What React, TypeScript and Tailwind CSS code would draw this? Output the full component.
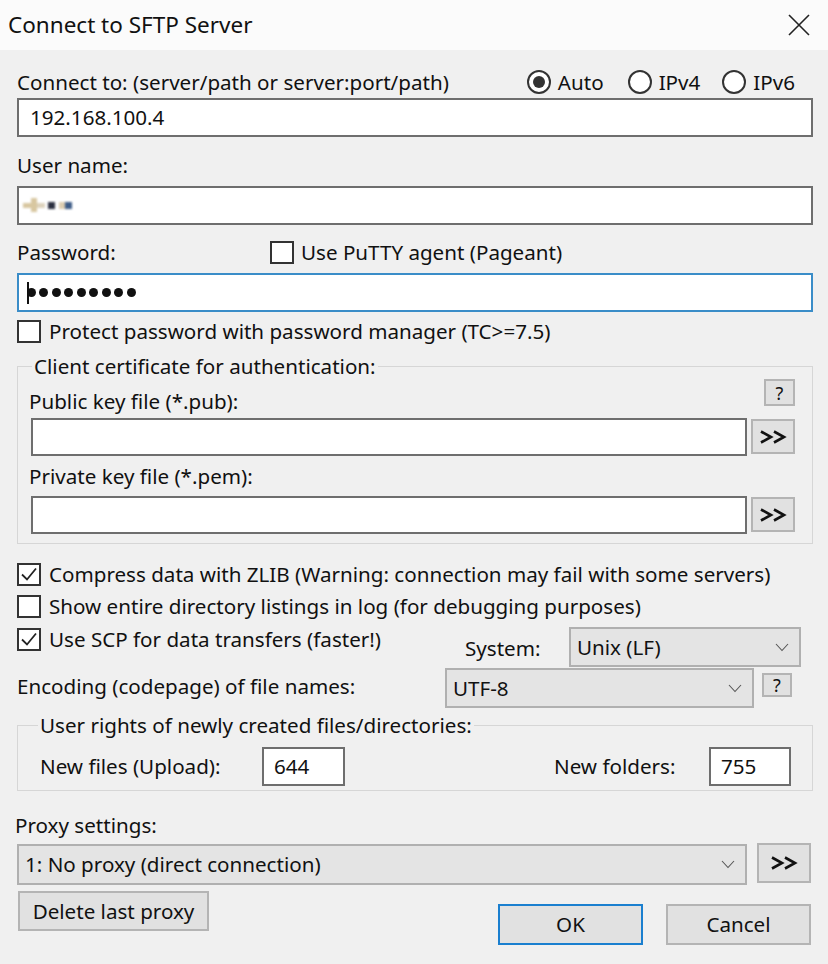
import * as React from "react"

const FONT = { fontFamily: "'Noto Sans', 'Liberation Sans', Arial, sans-serif" }

function Check({ checked = false }: { checked?: boolean }) {
  return (
    <span className="inline-flex w-[24px] h-[23px] shrink-0 items-center justify-center border-2 border-[#333] bg-white">
      {checked && (
        <svg width="18" height="16" viewBox="0 0 18 16" fill="none">
          <path d="M2 8.5 L7 13.5 L16 2.5" stroke="#222" strokeWidth="1.8" />
        </svg>
      )}
    </span>
  )
}

function Radio({ on = false }: { on?: boolean }) {
  return (
    <span className="inline-flex w-[24px] h-[24px] shrink-0 items-center justify-center rounded-full border-2 border-[#333] bg-white">
      {on && <span className="w-[12px] h-[12px] rounded-full bg-[#333]" />}
    </span>
  )
}

function TextBox({ className = "", focused = false, children }: { className?: string; focused?: boolean; children?: React.ReactNode }) {
  return (
    <div className={`flex items-center bg-white border-2 ${focused ? "border-[#3a8dc8]" : "border-[#6e6e6e]"} ${className}`}>
      {children}
    </div>
  )
}

function Combo({ className = "", value }: { className?: string; value: string }) {
  return (
    <div className={`flex items-center justify-between bg-[#e4e4e4] border-2 border-[#b0b0b0] pl-[6px] pr-[10px] ${className}`}>
      <span>{value}</span>
      <svg width="14" height="9" viewBox="0 0 14 9" fill="none">
        <path d="M1 1 L7 7.5 L13 1" stroke="#555" strokeWidth="1.1" />
      </svg>
    </div>
  )
}

function Btn({ className = "", children }: { className?: string; children: React.ReactNode }) {
  return (
    <div className={`flex items-center justify-center bg-[#e1e1e1] border-2 border-[#b4b4b4] ${className}`}>
      {children}
    </div>
  )
}

function Chevrons() {
  return (
    <svg width="28" height="14" viewBox="0 0 28 14" fill="none">
      <path d="M2 1.5 L12 7 L2 12.5" stroke="#111" strokeWidth="2.6" />
      <path d="M15 1.5 L25 7 L15 12.5" stroke="#111" strokeWidth="2.6" />
    </svg>
  )
}

export default function App() {
  return (
    <div className="w-[828px] h-[964px] bg-[#f0f0f0] text-[20.6px] text-[#111] leading-none overflow-hidden" style={FONT}>
      {/* Title bar */}
      <div className="h-[50px] bg-[#fbfbfb] flex items-center justify-between pl-[8px] pr-[18px]">
        <span className="text-[22.5px] text-[#111]">Connect to SFTP Server</span>
        <svg width="22" height="22" viewBox="0 0 22 22" fill="none">
          <path d="M1 1 L21 21 M21 1 L1 21" stroke="#222" strokeWidth="1.6" />
        </svg>
      </div>

      <div className="flex flex-col pl-[17px] pr-[15px]">
        {/* Connect to */}
        <div className="mt-[19px] h-[26px] flex items-center">
          <span className="flex-1">Connect to: (server/path or server:port/path)</span>
          <div className="flex items-center gap-[7px] mr-[18px]">
            <Radio on />
            <span className="mr-[17px]">Auto</span>
            <Radio />
            <span className="mr-[15px]">IPv4</span>
            <Radio />
            <span>IPv6</span>
          </div>
        </div>
        <TextBox className="mt-[3px] h-[39px] pl-[11px]">192.168.100.4</TextBox>

        {/* User name */}
        <div className="mt-[15px] h-[26px] flex items-center">User name:</div>
        <TextBox className="mt-[8px] h-[39px] pl-[4px]">
          <div className="flex items-center blur-[0.8px]">
            <span className="w-[8px] h-[5px] bg-[#d8c7a0]" />
            <span className="w-[6px] h-[14px] bg-[#d8c7a0] -mt-[2px]" />
            <span className="w-[8px] h-[5px] bg-[#ddd3bd] mr-[3px]" />
            <span className="w-[7px] h-[7px] bg-[#2b2f3f] mr-[4px]" />
            <span className="w-[6px] h-[7px] bg-[#dccdb0]" />
            <span className="w-[7px] h-[7px] bg-[#3c5b86]" />
          </div>
        </TextBox>

        {/* Password */}
        <div className="mt-[14px] h-[26px] flex items-center">
          <span className="w-[253px]">Password:</span>
          <Check />
          <span className="ml-[7px]">Use PuTTY agent (Pageant)</span>
        </div>
        <TextBox focused className="mt-[8px] h-[39px] pl-[8px] gap-[3.5px]">
          <span className="w-[2px] h-[22px] bg-[#111] -mr-[6px]" />
          {Array.from({ length: 9 }).map((_, i) => (
            <span key={i} className="w-[9px] h-[9px] rounded-full bg-[#111]" />
          ))}
        </TextBox>

        <div className="mt-[8px] h-[23px] flex items-center">
          <Check />
          <span className="ml-[8px]">Protect password with password manager (TC&gt;=7.5)</span>
        </div>

        {/* Client certificate */}
        <fieldset className="mt-[10px] border border-[#d6d6d6] pl-[13px] pr-[17px] pb-[9px]">
          <legend className="px-[2px] ml-[1px] leading-[26px]">Client certificate for authentication:</legend>
          <div className="h-[35px] flex justify-between">
            <span className="self-end leading-[26px] -ml-[2px]">Public key file (*.pub):</span>
            <Btn className="w-[31px] h-[27px] text-[18px]">?</Btn>
          </div>
          <div className="mt-[4px] flex items-start gap-[4px]">
            <TextBox className="flex-1 h-[38px]" />
            <Btn className="w-[44px] h-[35px] mt-[1px]"><Chevrons /></Btn>
          </div>
          <div className="mt-[7px] h-[26px] flex items-center -ml-[2px]">Private key file (*.pem):</div>
          <div className="mt-[7px] flex items-start gap-[4px]">
            <TextBox className="flex-1 h-[38px]" />
            <Btn className="w-[44px] h-[35px] mt-[1px]"><Chevrons /></Btn>
          </div>
        </fieldset>

        {/* Options */}
        <div className="mt-[18px] h-[24px] flex items-center">
          <Check checked />
          <span className="ml-[8px]">Compress data with ZLIB (Warning: connection may fail with some servers)</span>
        </div>
        <div className="mt-[8px] h-[24px] flex items-center">
          <Check />
          <span className="ml-[8px]">Show entire directory listings in log (for debugging purposes)</span>
        </div>
        <div className="mt-[9px] h-[40px] flex items-start">
          <div className="h-[24px] flex items-center w-[448px]">
            <Check checked />
            <span className="ml-[8px]">Use SCP for data transfers (faster!)</span>
          </div>
          <span className="self-center mt-[2px] w-[104px]">System:</span>
          <Combo className="w-[232px] h-[40px]" value="Unix (LF)" />
        </div>
        <div className="mt-[1px] h-[40px] flex items-center">
          <span className="w-[428px] -mt-[4px]">Encoding (codepage) of file names:</span>
          <Combo className="w-[309px] h-[40px]" value="UTF-8" />
          <Btn className="ml-[8px] w-[30px] h-[24px] text-[18px] -mt-[6px]">?</Btn>
        </div>

        {/* User rights */}
        <fieldset className="mt-[4px] border border-[#d6d6d6] pl-[22px] pr-[21px] pb-[4px]">
          <legend className="px-[2px] ml-[-2px] leading-[26px]">User rights of newly created files/directories:</legend>
          <div className="mt-[9px] flex items-center">
            <span className="w-[222px]">New files (Upload):</span>
            <TextBox className="w-[83px] h-[39px] pl-[10px]">644</TextBox>
            <span className="ml-auto w-[155px]">New folders:</span>
            <TextBox className="w-[82px] h-[39px] pl-[10px]">755</TextBox>
          </div>
        </fieldset>

        {/* Proxy */}
        <div className="mt-[21px] h-[26px] flex items-center -ml-[2px]">Proxy settings:</div>
        <div className="mt-[5px] flex items-start">
          <Combo className="w-[730px] h-[41px] mt-[1px]" value="1: No proxy (direct connection)" />
          <Btn className="ml-[10px] w-[54px] h-[40px]"><Chevrons /></Btn>
        </div>

        <div className="flex items-start mt-[6px]">
          <Btn className="ml-[1px] w-[191px] h-[40px]">Delete last proxy</Btn>
          <Btn className="ml-[289px] mt-[13px] w-[145px] h-[41px] !border-[#1a7fcf]">OK</Btn>
          <Btn className="ml-[23px] mt-[13px] w-[145px] h-[41px]">Cancel</Btn>
        </div>
      </div>
    </div>
  )
}
